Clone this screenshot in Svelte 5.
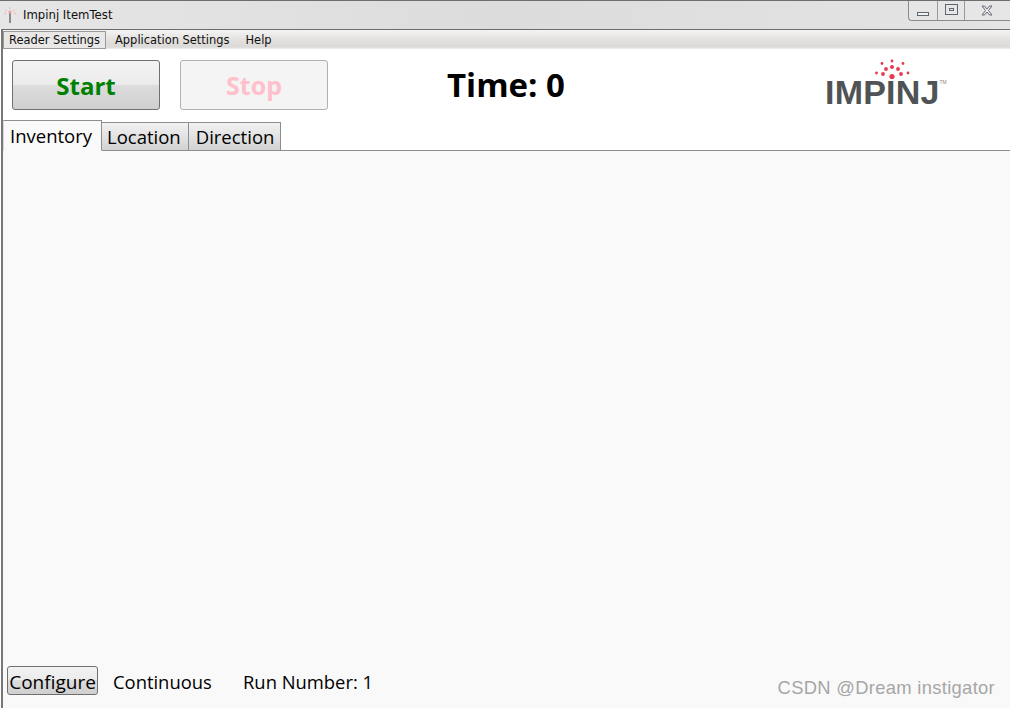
<script>
  let tabs = ["Inventory", "Location", "Direction"];
  let menus = ["Reader Settings", "Application Settings", "Help"];
  let active = "Inventory";
  let time = 0;
  let runNumber = 1;

  // red dots of the logo, x y r
  const dots = [
    [17, 2, 1.4], [7, 4.500, 1.4], [28, 4.500, 1.4],
    [11, 10, 1.9], [17, 8, 2], [23, 10, 1.9],
    [1.500, 14, 1.4], [8, 15, 1.9], [26, 15, 1.9], [33, 14, 1.4],
    [17, 17.500, 2.600],
  ];
</script>

<div class="window">
  <header class="titlebar">
    <div class="title">
      <svg class="appicon" width="14" height="16" viewBox="0 0 14 16">
        <rect x="6" y="6" width="2" height="10" fill="#8a8a8a" />
        <circle cx="7" cy="5" r="1.6" fill="#f3a0a0" />
        <path d="M2 3l2 1M12 3l-2 1M7 0v2M1 7l2-1M13 7l-2-1" stroke="#f0b5b5" fill="none" />
      </svg>
      <span>Impinj ItemTest</span>
    </div>
    <div class="winbtns">
      <div class="winbtn min"><i></i></div>
      <div class="winbtn max"><i></i></div>
      <div class="winbtn close">
        <svg width="14" height="11" viewBox="0 0 14 11">
          <path d="M2 1h2.5L7 4l2.500-3H12L8.500 5.500 12 10H9.500L7 7l-2.500 3H2l3.500-4.500z" fill="#eee" stroke="#667" stroke-width="1" />
        </svg>
      </div>
    </div>
  </header>

  <div class="client">
    <nav class="menubar">
      {#each menus as m, i}
        <div class="menuitem" class:selected={i === 0}>{m}</div>
      {/each}
    </nav>

    <div class="toolbar">
      <button class="bigbtn start">Start</button>
      <button class="bigbtn stop" disabled>Stop</button>
      <div class="time">Time: {time}</div>
      <div class="logo">
        <svg class="sparks" width="35" height="21" viewBox="0 0 35 21">
          {#each dots as d}
            <circle cx={d[0]} cy={d[1]} r={d[2]} fill="#e8384f" />
          {/each}
        </svg>
        <div class="wordmark">IMPINJ<sup>TM</sup></div>
      </div>
    </div>

    <div class="tabstrip">
      {#each tabs as t}
        <div class="tab" class:active={t === active}>{t}</div>
      {/each}
    </div>

    <main class="panel">
      <div class="statusrow">
        <button class="configure">Configure</button>
        <span class="mode">Continuous</span>
        <span class="run">Run Number: {runNumber}</span>
        <span class="watermark">CSDN @Dream instigator</span>
      </div>
    </main>
  </div>
</div>

<style>
  :global(body) {
    margin: 0;
    background: #fff;
    overflow: hidden;
  }

  .window {
    width: 1010px;
    height: 708px;
    display: flex;
    flex-direction: column;
    font-family: "Open Sans", "Noto Sans", sans-serif;
    color: #000;
    box-sizing: border-box;
  }

  .titlebar {
    height: 29px;
    flex: none;
    box-sizing: border-box;
    border-top: 1px solid #6e6e6e;
    background: linear-gradient(90deg, #e6e6e6, #dcdcdc 50%, #e4e4e4);
    display: flex;
    justify-content: space-between;
    align-items: flex-start;
  }

  .title {
    display: flex;
    align-items: center;
    gap: 6px;
    padding: 6px 0 0 3px;
    font-family: "DejaVu Sans", sans-serif;
    font-size: 11.700px;
    color: #111;
  }

  .winbtns {
    display: flex;
    height: 19px;
    border: 1px solid #8b8b8b;
    border-top: none;
    border-right: none;
    border-radius: 0 0 0 4px;
    background: #e6e6e6;
  }

  .winbtn {
    display: flex;
    align-items: center;
    justify-content: center;
    height: 100%;
    box-sizing: border-box;
  }

  .min {
    width: 29px;
    border-right: 1px solid #9a9a9a;
  }

  .min i {
    display: block;
    width: 10px;
    height: 2px;
    margin-top: 6px;
    background: #f2f2f2;
    border: 1px solid #5f6670;
  }

  .max {
    width: 27px;
    border-right: 1px solid #9a9a9a;
  }

  .max i {
    display: block;
    width: 5px;
    height: 3px;
    margin-top: -2px;
    border: 3px solid #e6e6e6;
    outline: 1px solid #5f6670;
    box-shadow: inset 0 0 0 1px #5f6670;
  }

  .close {
    width: 45px;
    padding-right: 1px;
  }

  .client {
    flex: 1;
    min-height: 0;
    display: flex;
    flex-direction: column;
    border-top: 1px solid #6c6c6c;
    border-left: 2px solid #777;
    margin-left: 1px;
    box-sizing: border-box;
  }

  .menubar {
    height: 18px;
    flex: none;
    display: flex;
    align-items: center;
    padding: 1px 0 0 0;
    background: linear-gradient(180deg, #f4f4f4, #e2e0de 55%, #dcdad8 90%, #f0f0f0);
    font-family: "DejaVu Sans", sans-serif;
    font-size: 11.450px;
    color: #111;
  }

  .menuitem {
    padding: 0 7px 0 7px;
    line-height: 16px;
    height: 16px;
    border: 1px solid transparent;
    white-space: nowrap;
  }

  .menuitem.selected {
    border-color: #9a9a9a;
    background: #e9e8e7;
    padding: 0 5px 0 5px;
    margin-right: 1px;
  }

  .toolbar {
    height: 72px;
    flex: none;
    display: flex;
    align-items: flex-start;
    padding: 11px 0 0 9px;
    box-sizing: border-box;
    background: #fff;
  }

  .bigbtn {
    width: 148px;
    height: 50px;
    box-sizing: border-box;
    border-radius: 3px;
    font-family: "Open Sans", sans-serif;
    font-weight: 700;
    font-size: 25px;
    padding: 0;
  }

  .start {
    color: #008000;
    font-size: 24px;
    border: 1px solid #707070;
    background: linear-gradient(180deg, #f3f3f3 0%, #ebebeb 49%, #dddddd 50%, #cfcfcf 100%);
  }

  .stop {
    color: #ffc0cb;
    margin-left: 20px;
    border: 1px solid #adb2b5;
    background: #f4f4f4;
  }

  .time {
    font-family: "Open Sans", sans-serif;
    font-weight: 700;
    font-size: 33px;
    line-height: 50px;
    margin-left: 119px;
    white-space: nowrap;
    width: 378px;
  }

  .logo {
    margin-top: -1px;
    width: 122px;
    display: flex;
    flex-direction: column;
    align-items: flex-start;
  }

  .sparks {
    margin-left: 50px;
    display: block;
  }

  .wordmark {
    font-family: "Liberation Sans", Arial, sans-serif;
    font-weight: 700;
    font-size: 34px;
    line-height: 25px;
    color: #505355;
    white-space: nowrap;
    letter-spacing: 0.200px;
  }

  .wordmark sup {
    font-size: 5px;
    font-weight: 400;
    letter-spacing: 0;
    vertical-align: 20px;
    line-height: 0;
    color: #888;
  }

  .tabstrip {
    height: 30px;
    flex: none;
    display: flex;
    align-items: flex-end;
    position: relative;
    z-index: 1;
    margin-bottom: -1px;
    font-size: 18.500px;
  }

  .tab {
    height: 29px;
    line-height: 27px;
    box-sizing: border-box;
    padding: 0 7px 0 5px;
    border: 1px solid #8c8e94;
    margin-left: -1px;
    background: linear-gradient(180deg, #f2f2f2, #d2d2d2);
  }

  .tab:first-child {
    margin-left: 0;
  }

  .tab:last-child {
    padding: 0 6px 0 7px;
  }

  .tab.active {
    height: 31px;
    line-height: 30px;
    padding: 0 9px 0 6px;
    background: #f9f9f9;
    border-bottom-color: #f9f9f9;
    border-left-color: #d8d8d8;
    position: relative;
    z-index: 1;
  }

  .panel {
    flex: 1;
    min-height: 0;
    display: flex;
    flex-direction: column;
    justify-content: flex-end;
    background: #f9f9f9;
    border-top: 1px solid #8c8e94;
  }

  .statusrow {
    height: 56px;
    display: flex;
    align-items: center;
    padding: 0 0 0 4px;
    font-size: 18.400px;
  }

  .configure {
    width: 91px;
    height: 29px;
    padding: 2px 0 0;
    box-sizing: border-box;
    border: 1px solid #707070;
    border-radius: 3px;
    background: linear-gradient(180deg, #f2f2f2, #ebebeb 50%, #dddddd 50%, #cfcfcf);
    font-family: "Open Sans", sans-serif;
    font-size: 19px;
    color: #000;
  }

  .mode {
    margin: 2px 0 0 15px;
    width: 130px;
  }

  .run {
    margin-top: 2px;
  }

  .watermark {
    margin: 16px 15px 0 auto;
    font-family: "Liberation Sans", Arial, sans-serif;
    font-size: 18.400px;
    color: #a6a6a6;
    letter-spacing: 0.300px;
  }
</style>
